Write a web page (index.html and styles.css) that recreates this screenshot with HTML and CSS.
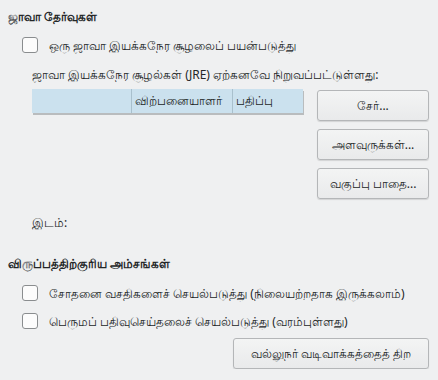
FILE: index.html
```html
<!DOCTYPE html>
<html lang="ta">
<head>
    <meta charset="UTF-8">
    <title>ஜாவா தேர்வுகள்</title>
    <link rel="stylesheet" href="styles.css">
</head>
<body>
    <div class="page">
        <div class="section-title">ஜாவா தேர்வுகள்</div>

        <label class="check-row first">
            <span class="box"></span>
            <span>ஒரு ஜாவா இயக்கநேர சூழலைப் பயன்படுத்து</span>
        </label>

        <div class="jre">
            <div class="jre-label">ஜாவா இயக்கநேர சூழல்கள் (JRE) ஏற்கனவே நிறுவப்பட்டுள்ளது:</div>
            <div class="jre-body">
                <div class="jre-list">
                    <div class="list-head">
                        <div class="col col-name"></div>
                        <div class="col col-vendor">விற்பனையாளர்</div>
                        <div class="col col-version">பதிப்பு</div>
                    </div>
                </div>
                <div class="jre-buttons">
                    <button>சேர்...</button>
                    <button>அளவுருக்கள்...</button>
                    <button>வகுப்பு பாதை...</button>
                </div>
            </div>
            <div class="location">இடம்:</div>
        </div>

        <div class="section-title second">விருப்பத்திற்குரிய அம்சங்கள்</div>

        <label class="check-row">
            <span class="box"></span>
            <span>சோதனை வசதிகளைச் செயல்படுத்து (நிலையற்றதாக இருக்கலாம்)</span>
        </label>
        <label class="check-row">
            <span class="box"></span>
            <span>பெருமப் பதிவுசெய்தலைச் செயல்படுத்து (வரம்புள்ளது)</span>
        </label>

        <div class="footer">
            <button>வல்லுநர் வடிவாக்கத்தைத் திற</button>
        </div>
    </div>
</body>
</html>
```

FILE: styles.css
```css
body {
    margin: 0;
    background-color: #eff0f1;
    color: #232627;
    font-family: "Noto Sans", "DejaVu Sans", sans-serif;
    font-size: 12px;
    white-space: nowrap;
}

.page {
    padding: 8px 9px 0 8px;
}

.section-title {
    font-weight: bold;
    font-size: 12px;
    height: 18px;
    line-height: 18px;
}

.section-title.second {
    margin-top: 23px;
}

.check-row {
    display: flex;
    align-items: center;
    gap: 11px;
    height: 16px;
    padding-left: 14px;
    margin-top: 12px;
}

.check-row.first {
    margin-top: 11px;
}

.box {
    width: 14px;
    height: 14px;
    border: 1px solid #8a8d8f;
    border-radius: 3px;
    background: #fcfcfc;
    flex: none;
}

.jre {
    padding-left: 24px;
}

.jre-label {
    margin-top: 13px;
    height: 18px;
    line-height: 18px;
}

.jre-body {
    display: flex;
    gap: 14px;
    margin-top: 5px;
}

.jre-list {
    flex: 1;
}

.list-head {
    display: flex;
    height: 24px;
    background-color: #cbe1ee;
    box-shadow: 1px 2px 0 #b9bcbe;
}

.col {
    line-height: 24px;
    padding-left: 3px;
    overflow: hidden;
}

.col-name {
    width: 96px;
}

.col-vendor {
    width: 97px;
    border-left: 1px solid #a9c0cd;
}

.col-version {
    flex: 1;
    border-left: 1px solid #a9c0cd;
}

.jre-buttons {
    display: flex;
    flex-direction: column;
    gap: 8px;
    margin-top: 1px;
    width: 112px;
}

button {
    height: 31px;
    font-family: inherit;
    font-size: 12px;
    color: #232627;
    background: linear-gradient(#f3f4f4, #e9eaeb);
    border: 1px solid #b4b6b8;
    border-radius: 3px;
    box-shadow: 0 1px 1px rgba(0,0,0,0.12);
    padding: 0 6px;
}

.location {
    margin-top: 15px;
    height: 18px;
    line-height: 18px;
}

.footer {
    display: flex;
    justify-content: flex-end;
    margin-top: 9px;
}

.footer button {
    width: 196px;
}
```
